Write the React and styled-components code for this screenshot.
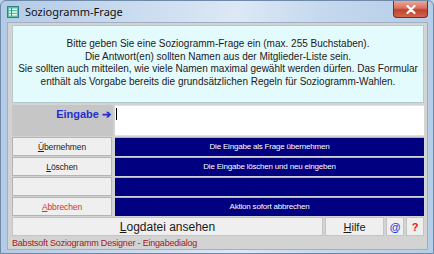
import React from "react";
import styled, { createGlobalStyle } from "styled-components";

const Global = createGlobalStyle`
  html, body { margin: 0; padding: 0; background: #bcd3ea; }
  body { font-family: "Liberation Sans", Arial, sans-serif; }
`;

const Window = styled.div`
  width: 434px;
  height: 254px;
  box-sizing: border-box;
  display: flex;
  flex-direction: column;
  background: linear-gradient(90deg, #b3cbe6 0%, #c9dbef 30%, #dce8f5 55%, #c4d8ee 75%, #b6cde7 100%);
  border: 1px solid #6f8aa8;
  border-radius: 6px 6px 0 0;
  overflow: hidden;
`;

const TitleBar = styled.div`
  height: 21px;
  display: flex;
  align-items: center;
  padding: 0 5px 0 6px;
  flex: none;
`;

const TitleText = styled.span`
  font-family: "Noto Sans", "Open Sans", sans-serif;
  font-size: 11px;
  color: #111;
  margin-left: 6px;
`;

const CloseButton = styled.div`
  margin-left: auto;
  align-self: flex-start;
  width: 35px;
  height: 17px;
  border: 1px solid #7a2b22;
  border-top: none;
  border-radius: 0 0 4px 4px;
  background: linear-gradient(180deg, #e9a99a 0%, #d8705e 45%, #c0432f 55%, #d0644c 100%);
  display: flex;
  align-items: center;
  justify-content: center;
  box-sizing: border-box;
`;

const Client = styled.div`
  margin: 0 5px 0 6px;
  height: 228px;
  background: #d3d3d3;
  border: 1px solid #9fb0c4;
  box-sizing: border-box;
  padding: 2px 3px 0 4px;
  display: flex;
  flex-direction: column;
  flex: none;
`;

const InfoPanel = styled.div`
  height: 79px;
  box-sizing: border-box;
  background: #e4fbfd;
  border: 1px solid #b8c8cc;
  display: flex;
  flex-direction: column;
  align-items: center;
  justify-content: center;
  text-align: center;
  font-size: 10px;
  line-height: 12.5px;
  color: #1a1a1a;
  padding-bottom: 2px;
`;

const InputRow = styled.div`
  margin-top: 2px;
  height: 31px;
  display: grid;
  grid-template-columns: 101px 1fr;
  gap: 2px;
`;

const LabelCell = styled.div`
  background: #c6c6c6;
  display: flex;
  justify-content: flex-end;
  align-items: flex-start;
  padding: 3px 2px 0 0;
  color: #1f2fd6;
  font-weight: bold;
  font-size: 11px;
`;

const InputBox = styled.div`
  background: #fff;
  border-top: 1px solid #e2e2e2;
  border-bottom: 1px solid #e2e2e2;
  position: relative;
`;

const Caret = styled.span`
  position: absolute;
  left: 1px;
  top: 2px;
  width: 1px;
  height: 12px;
  background: #000;
`;

const ActionGrid = styled.div`
  margin-top: 1px;
  display: grid;
  grid-template-columns: 100px 1fr;
  grid-auto-rows: 19px;
  column-gap: 3px;
  row-gap: 1px;
`;

const SideButton = styled.div`
  background: #efefef;
  border: 1px solid #b4b4b4;
  box-sizing: border-box;
  display: flex;
  align-items: center;
  justify-content: center;
  font-size: 8.5px;
  letter-spacing: -0.1px;
  color: ${(p) => (p.$danger ? "#e02a2a" : "#222")};
`;

const Describe = styled.div`
  background: #000080;
  border-top: 1px solid #b0b0c8;
  display: flex;
  align-items: center;
  justify-content: center;
  font-size: 8px;
  letter-spacing: -0.2px;
  color: #fff;
  padding-bottom: 2px;
  box-sizing: border-box;
`;

const BottomRow = styled.div`
  margin-top: 1px;
  height: 19px;
  display: grid;
  grid-template-columns: 311px 59px 18px 18px;
  gap: 2px;
`;

const BottomButton = styled.div`
  background: #efefef;
  border: 1px solid #c4c4c4;
  box-sizing: border-box;
  display: flex;
  align-items: center;
  justify-content: center;
  font-size: ${(p) => (p.$big ? "12px" : "11px")};
  font-weight: ${(p) => (p.$bold ? "bold" : "normal")};
  color: ${(p) => p.$color || "#1a1a1a"};
`;

const Status = styled.div`
  height: 13px;
  display: flex;
  align-items: center;
  font-size: 9px;
  letter-spacing: -0.2px;
  color: #a02020;
`;

const U = styled.span`
  text-decoration: underline;
`;

const AppIcon = () => (
  <svg width="12" height="12" viewBox="0 0 12 12">
    <rect x="0.5" y="0.5" width="11" height="11" fill="#5cc0a0" stroke="#2f7f8f" />
    <rect x="2" y="2.5" width="8" height="1.5" fill="#e8fff4" />
    <rect x="2" y="5.3" width="8" height="1.5" fill="#e8fff4" />
    <rect x="2" y="8.1" width="8" height="1.5" fill="#e8fff4" />
    <rect x="4" y="2" width="1" height="8" fill="#2f8f7f" />
  </svg>
);

const CloseX = () => (
  <svg width="10" height="9" viewBox="0 0 10 9">
    <path d="M1.5 1 L8.5 8 M8.5 1 L1.5 8" stroke="#ffffff" strokeWidth="2.2" strokeLinecap="round" />
  </svg>
);

const actions = [
  { label: <><U>Ü</U>bernehmen</>, text: "Die Eingabe als Frage übernehmen" },
  { label: <><U>L</U>öschen</>, text: "Die Eingabe löschen und neu eingeben" },
  { label: "", text: "" },
  { label: <><U>A</U>bbrechen</>, text: "Aktion sofort abbrechen", danger: true },
];

export default function App() {
  return (
    <>
      <Global />
      <Window>
        <TitleBar>
          <AppIcon />
          <TitleText>Soziogramm-Frage</TitleText>
          <CloseButton>
            <CloseX />
          </CloseButton>
        </TitleBar>
        <Client>
          <InfoPanel>
            <div>Bitte geben Sie eine Soziogramm-Frage ein (max. 255 Buchstaben).</div>
            <div>Die Antwort(en) sollten Namen aus der Mitglieder-Liste sein.</div>
            <div>Sie sollten auch mitteilen, wie viele Namen maximal gewählt werden dürfen. Das Formular</div>
            <div>enthält als Vorgabe bereits die grundsätzlichen Regeln für Soziogramm-Wahlen.</div>
          </InfoPanel>
          <InputRow>
            <LabelCell>Eingabe&nbsp;➔</LabelCell>
            <InputBox>
              <Caret />
            </InputBox>
          </InputRow>
          <ActionGrid>
            {actions.map((a, i) => (
              <React.Fragment key={i}>
                <SideButton $danger={a.danger}>{a.label}</SideButton>
                <Describe>{a.text}</Describe>
              </React.Fragment>
            ))}
          </ActionGrid>
          <BottomRow>
            <BottomButton $big>
              <span><U>L</U>ogdatei ansehen</span>
            </BottomButton>
            <BottomButton>
              <span><U>H</U>ilfe</span>
            </BottomButton>
            <BottomButton $bold $color="#2a3fd0">@</BottomButton>
            <BottomButton $bold $color="#e02020">?</BottomButton>
          </BottomRow>
          <Status>Babstsoft Soziogramm Designer - Eingabedialog</Status>
        </Client>
      </Window>
    </>
  );
}
